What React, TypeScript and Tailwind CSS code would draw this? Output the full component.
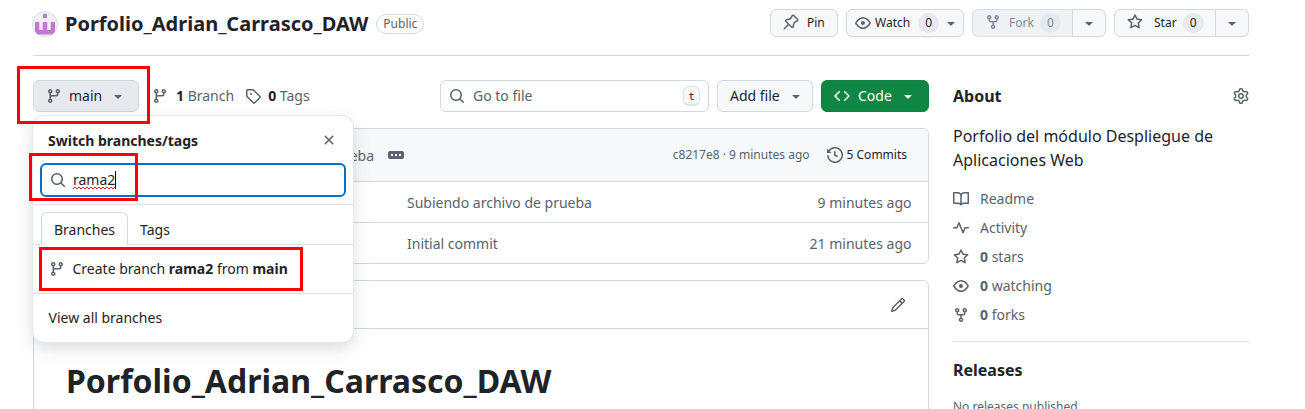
import type { ReactNode } from "react";

const icons = {
  branch:
    "M9.5 3.25a2.25 2.25 0 1 1 3 2.122V6A2.5 2.5 0 0 1 10 8.5H6a1 1 0 0 0-1 1v1.128a2.251 2.251 0 1 1-1.5 0V5.372a2.25 2.25 0 1 1 1.5 0v1.836A2.493 2.493 0 0 1 6 7h4a1 1 0 0 0 1-1v-.628A2.25 2.25 0 0 1 9.5 3.25Zm-6 0a.75.75 0 1 0 1.5 0 .75.75 0 0 0-1.5 0Zm8.25-.75a.75.75 0 1 0 0 1.5.75.75 0 0 0 0-1.5ZM4.25 12a.75.75 0 1 0 0 1.5.75.75 0 0 0 0-1.5Z",
  tag: "M1 7.775V2.75C1 1.784 1.784 1 2.75 1h5.025c.464 0 .91.184 1.238.513l6.25 6.25a1.75 1.75 0 0 1 0 2.474l-5.026 5.026a1.75 1.75 0 0 1-2.474 0l-6.25-6.25A1.752 1.752 0 0 1 1 7.775Zm1.5 0c0 .066.026.13.073.177l6.25 6.25a.25.25 0 0 0 .354 0l5.025-5.025a.25.25 0 0 0 0-.354l-6.25-6.25a.25.25 0 0 0-.177-.073H2.75a.25.25 0 0 0-.25.25ZM6 5a1 1 0 1 1 0 2 1 1 0 0 1 0-2Z",
  star: "M8 .25a.75.75 0 0 1 .673.418l1.882 3.815 4.21.612a.75.75 0 0 1 .416 1.279l-3.046 2.97.719 4.192a.751.751 0 0 1-1.088.791L8 12.347l-3.766 1.98a.75.75 0 0 1-1.088-.79l.72-4.194L.818 6.374a.75.75 0 0 1 .416-1.28l4.21-.611L7.327.668A.75.75 0 0 1 8 .25Zm0 2.445L6.615 5.5a.75.75 0 0 1-.564.41l-3.097.45 2.24 2.184a.75.75 0 0 1 .216.664l-.528 3.084 2.769-1.456a.75.75 0 0 1 .698 0l2.77 1.456-.53-3.084a.75.75 0 0 1 .216-.664l2.24-2.183-3.096-.45a.75.75 0 0 1-.564-.41L8 2.694Z",
  eye: "M8 2c1.981 0 3.671.992 4.933 2.078 1.27 1.091 2.187 2.345 2.637 3.023a1.62 1.62 0 0 1 0 1.798c-.45.678-1.367 1.932-2.637 3.023C11.67 13.008 9.981 14 8 14c-1.981 0-3.671-.992-4.933-2.078C1.797 10.83.88 9.576.43 8.898a1.62 1.62 0 0 1 0-1.798c.45-.677 1.367-1.931 2.637-3.022C4.33 2.992 6.019 2 8 2ZM1.679 7.932a.12.12 0 0 0 0 .136c.411.622 1.241 1.75 2.366 2.717C5.176 11.758 6.527 12.5 8 12.5c1.473 0 2.825-.742 3.955-1.715 1.124-.967 1.954-2.096 2.366-2.717a.12.12 0 0 0 0-.136c-.412-.621-1.242-1.75-2.366-2.717C10.824 4.242 9.473 3.5 8 3.5c-1.473 0-2.825.742-3.955 1.715-1.124.967-1.954 2.096-2.366 2.717ZM8 10a2 2 0 1 1-.001-3.999A2 2 0 0 1 8 10Z",
  fork: "M5 5.372v.878c0 .414.336.75.75.75h4.5a.75.75 0 0 0 .75-.75v-.878a2.25 2.25 0 1 1 1.5 0v.878a2.25 2.25 0 0 1-2.25 2.25h-1.5v2.128a2.251 2.251 0 1 1-1.5 0V8.5h-1.5A2.25 2.25 0 0 1 3.5 6.25v-.878a2.25 2.25 0 1 1 1.5 0ZM5 3.25a.75.75 0 1 0-1.5 0 .75.75 0 0 0 1.5 0Zm6.75.75a.75.75 0 1 0 0-1.5.75.75 0 0 0 0 1.5Zm-3 8.75a.75.75 0 1 0-1.5 0 .75.75 0 0 0 1.5 0Z",
  search:
    "M10.68 11.74a6 6 0 0 1-7.922-8.982 6 6 0 0 1 8.982 7.922l3.04 3.04a.749.749 0 0 1-.326 1.275.749.749 0 0 1-.734-.215ZM11.5 7a4.499 4.499 0 1 0-8.997 0A4.499 4.499 0 0 0 11.5 7Z",
  x: "M3.72 3.72a.75.75 0 0 1 1.06 0L8 6.94l3.22-3.22a.749.749 0 0 1 1.275.326.749.749 0 0 1-.215.734L9.06 8l3.22 3.22a.749.749 0 0 1-.326 1.275.749.749 0 0 1-.734-.215L8 9.06l-3.22 3.22a.751.751 0 0 1-1.042-.018.751.751 0 0 1-.018-1.042L6.94 8 3.72 4.78a.75.75 0 0 1 0-1.06Z",
  caret:
    "m4.427 7.427 3.396 3.396a.25.25 0 0 0 .354 0l3.396-3.396A.25.25 0 0 0 11.396 7H4.604a.25.25 0 0 0-.177.427Z",
  history:
    "m.427 1.927 1.215 1.215a8.002 8.002 0 1 1-1.6 5.685.75.75 0 1 1 1.493-.154 6.5 6.5 0 1 0 1.18-4.458l1.358 1.358A.25.25 0 0 1 3.896 6H.25A.25.25 0 0 1 0 5.75V2.104a.25.25 0 0 1 .427-.177ZM7.75 4a.75.75 0 0 1 .75.75v2.992l2.028.812a.75.75 0 0 1-.557 1.392l-2.5-1A.751.751 0 0 1 7 8.25v-3.5A.75.75 0 0 1 7.75 4Z",
  pencil:
    "M11.013 1.427a1.75 1.75 0 0 1 2.474 0l1.086 1.086a1.75 1.75 0 0 1 0 2.474l-8.61 8.61c-.21.21-.47.364-.756.445l-3.251.93a.75.75 0 0 1-.927-.928l.929-3.25c.081-.286.235-.547.445-.758l8.61-8.61Zm.176 4.823L9.75 4.81l-6.286 6.287a.253.253 0 0 0-.064.108l-.558 1.953 1.953-.558a.253.253 0 0 0 .108-.064Zm1.238-3.763a.25.25 0 0 0-.354 0L10.811 3.75l1.439 1.44 1.263-1.263a.25.25 0 0 0 0-.354Z",
  gear: "M8 0a8.2 8.2 0 0 1 .701.031C9.444.095 9.99.645 10.16 1.29l.288 1.107c.018.066.079.158.212.224.231.114.454.243.668.386.123.082.233.09.299.071l1.103-.303c.644-.176 1.392.021 1.82.63.27.385.506.792.704 1.218.315.675.111 1.422-.364 1.891l-.814.806c-.049.048-.098.147-.088.294.016.257.016.515 0 .772-.01.147.038.246.088.294l.814.806c.475.469.679 1.216.364 1.891a7.977 7.977 0 0 1-.704 1.217c-.428.61-1.176.807-1.82.63l-1.102-.302c-.067-.019-.177-.011-.3.071a5.909 5.909 0 0 1-.668.386c-.133.066-.194.158-.211.224l-.29 1.106c-.168.646-.715 1.196-1.458 1.26a8.006 8.006 0 0 1-1.402 0c-.743-.064-1.289-.614-1.458-1.26l-.289-1.106c-.018-.066-.079-.158-.212-.224a5.738 5.738 0 0 1-.668-.386c-.123-.082-.233-.09-.299-.071l-1.103.303c-.644.176-1.392-.021-1.82-.63a8.12 8.12 0 0 1-.704-1.218c-.315-.675-.111-1.422.363-1.891l.815-.806c.05-.048.098-.147.088-.294a6.214 6.214 0 0 1 0-.772c.01-.147-.038-.246-.088-.294l-.815-.806C.635 6.045.431 5.298.746 4.623a7.92 7.92 0 0 1 .704-1.217c.428-.61 1.176-.807 1.82-.63l1.102.302c.067.019.177.011.3-.071.214-.143.437-.272.668-.386.133-.066.194-.158.211-.224l.29-1.106C6.009.645 6.556.095 7.299.03 7.53.01 7.764 0 8 0Zm-.571 1.525c-.036.003-.108.036-.137.146l-.289 1.105c-.147.561-.549.967-.998 1.189-.173.086-.34.183-.5.29-.417.278-.97.423-1.529.27l-1.103-.303c-.109-.03-.175.016-.195.045-.22.312-.412.644-.573.99-.014.031-.021.11.059.19l.815.806c.411.406.562.957.53 1.456a4.709 4.709 0 0 0 0 .582c.032.499-.119 1.05-.53 1.456l-.815.806c-.081.08-.073.159-.059.19.162.346.353.677.573.989.02.03.085.076.195.046l1.102-.303c.56-.153 1.113-.008 1.53.27.161.107.328.204.501.29.447.222.85.629.997 1.189l.289 1.105c.029.109.101.143.137.146a6.6 6.6 0 0 0 1.142 0c.036-.003.108-.036.137-.146l.289-1.105c.147-.561.549-.967.998-1.189.173-.086.34-.183.5-.29.417-.278.97-.423 1.529-.27l1.103.303c.109.029.175-.016.195-.045.22-.313.411-.644.573-.99.014-.031.021-.11-.059-.19l-.815-.806c-.411-.406-.562-.957-.53-1.456a4.709 4.709 0 0 0 0-.582c-.032-.499.119-1.05.53-1.456l.815-.806c.081-.08.073-.159.059-.19a6.464 6.464 0 0 0-.573-.989c-.02-.03-.085-.076-.195-.046l-1.102.303c-.56.153-1.113.008-1.53-.27a4.44 4.44 0 0 0-.501-.29c-.447-.222-.85-.629-.997-1.189l-.289-1.105c-.029-.11-.101-.143-.137-.146a6.6 6.6 0 0 0-1.142 0ZM11 8a3 3 0 1 1-6 0 3 3 0 0 1 6 0ZM9.5 8a1.5 1.5 0 1 0-3.001.001A1.5 1.5 0 0 0 9.5 8Z",
  book: "M0 1.75A.75.75 0 0 1 .75 1h4.253c1.227 0 2.317.59 3 1.501A3.743 3.743 0 0 1 11.006 1h4.245a.75.75 0 0 1 .75.75v10.5a.75.75 0 0 1-.75.75h-4.507a2.25 2.25 0 0 0-1.591.659l-.622.621a.75.75 0 0 1-1.06 0l-.622-.621A2.25 2.25 0 0 0 5.258 13H.75a.75.75 0 0 1-.75-.75Zm7.251 10.324.004-5.073-.002-2.253A2.25 2.25 0 0 0 5.003 2.5H1.5v9h3.757a3.75 3.75 0 0 1 1.994.574ZM8.755 4.75l-.004 7.322a3.752 3.752 0 0 1 1.992-.572H14.5v-9h-3.495a2.25 2.25 0 0 0-2.25 2.25Z",
  pulse:
    "M6 2c.306 0 .582.187.696.471L10 10.731l1.304-3.26A.751.751 0 0 1 12 7h3.25a.75.75 0 0 1 0 1.5h-2.742l-1.812 4.528a.751.751 0 0 1-1.392 0L6 4.77 4.696 8.03A.75.75 0 0 1 4 8.5H.75a.75.75 0 0 1 0-1.5h2.742l1.812-4.529A.751.751 0 0 1 6 2Z",
  code: "m11.28 3.22 4.25 4.25a.75.75 0 0 1 0 1.06l-4.25 4.25a.749.749 0 0 1-1.275-.326.749.749 0 0 1 .215-.734L13.94 8l-3.72-3.72a.749.749 0 0 1 .326-1.275.749.749 0 0 1 .734.215Zm-6.56 0a.751.751 0 0 1 1.042.018.751.751 0 0 1 .018 1.042L2.06 8l3.72 3.72a.749.749 0 0 1-.326 1.275.749.749 0 0 1-.734-.215L.47 8.53a.75.75 0 0 1 0-1.06Z",
  pin: "m11.294.984 3.722 3.722a1.75 1.75 0 0 1-.504 2.826l-1.327.613a3.089 3.089 0 0 0-1.707 2.084l-.584 2.454c-.317 1.332-1.972 1.8-2.94.832L5.75 11.311 1.78 15.28a.749.749 0 1 1-1.06-1.06l3.969-3.97-2.204-2.204c-.968-.968-.5-2.623.832-2.94l2.454-.584a3.08 3.08 0 0 0 2.084-1.707l.613-1.327a1.75 1.75 0 0 1 2.826-.504ZM6.283 9.723l2.732 2.731a.25.25 0 0 0 .42-.119l.584-2.454a4.586 4.586 0 0 1 2.537-3.098l1.328-.613a.25.25 0 0 0 .072-.404l-3.722-3.722a.25.25 0 0 0-.404.072l-.613 1.328a4.584 4.584 0 0 1-3.098 2.537l-2.454.584a.25.25 0 0 0-.119.42l2.731 2.732Z",
};

type IconName = keyof typeof icons;

function Icon({ name, className = "" }: { name: IconName; className?: string }) {
  return (
    <svg viewBox="0 0 16 16" fill="currentColor" className={`size-4 shrink-0 ${className}`}>
      <path d={icons[name]} />
    </svg>
  );
}

function Counter({ className = "" }: { className?: string }) {
  return (
    <span className={`flex h-5 w-[21px] items-center justify-center rounded-full bg-[#e6eaef] text-xs ${className}`}>
      0
    </span>
  );
}

function Avatar() {
  return (
    <svg viewBox="0 0 26 26" className="-ml-px size-[26px] shrink-0">
      <circle cx="13" cy="13" r="12.5" fill="#f0f0f0" stroke="#dcdfe3" />
      <path
        fill="#c078d0"
        d="M11 3h4v4h-4zM3 11h4.300v8h3.400v-8h4.600v8h3.400v-8H23v9.500L20.500 23.500h-15L3 20.500z"
      />
    </svg>
  );
}

function Header() {
  return (
    <header className="flex h-14 items-start border-b border-[#d1d9e0]">
      <div className="flex h-[48px] items-center">
        <Avatar />
        <h1 className="ml-[7px] text-xl font-bold whitespace-nowrap">Porfolio_Adrian_Carrasco_DAW</h1>
        <span className="ml-2 flex h-5 w-12 items-center justify-center rounded-full border border-[#d1d9e0] text-xs text-[#59636e]">
          Public
        </span>
      </div>
      <div className="mt-[9px] ml-auto flex gap-2 text-xs">
        <button className="flex h-7 w-[68px] items-center rounded-md border border-[#d1d9e0] bg-[#f6f8fa] pl-3">
          <Icon name="pin" className="mr-2 -translate-y-px text-[#59636e]" />
          Pin
        </button>
        <button className="flex h-7 w-[118px] items-center rounded-md border border-[#d1d9e0] bg-[#f6f8fa] pl-2 shadow-[0_1px_0_rgba(31,35,40,0.04)]">
          <Icon name="eye" className="mr-1 text-[#59636e]" />
          Watch
          <Counter className="ml-2" />
          <Icon name="caret" className="ml-1 text-[#59636e]" />
        </button>
        <div className="flex h-7">
          <button className="flex w-[101px] items-center rounded-l-md border border-[#d1d9e0]/70 border-r-[#d1d9e0] bg-[#eff2f5] pl-3 text-[#818b98]">
            <Icon name="fork" className="mr-2 -translate-y-px" />
            Fork
            <Counter className="ml-1.5" />
          </button>
          <button className="flex w-[33px] items-center justify-center rounded-r-md border border-l-0 border-[#d1d9e0] bg-[#f6f8fa] text-[#59636e]">
            <Icon name="caret" />
          </button>
        </div>
        <div className="flex h-7">
          <button className="flex w-[102px] items-center rounded-l-md border border-[#d1d9e0] bg-[#f6f8fa] pl-3">
            <Icon name="star" className="mr-[11px] -translate-y-px text-[#59636e]" />
            Star
            <Counter className="ml-1.5" />
          </button>
          <button className="flex w-[33px] items-center justify-center rounded-r-md border border-l-0 border-[#d1d9e0] bg-[#f6f8fa] text-[#59636e]">
            <Icon name="caret" />
          </button>
        </div>
      </div>
    </header>
  );
}

function BranchMenu() {
  return (
    <div className="absolute top-[35px] -left-px z-10 flex h-[228px] w-[322px] flex-col rounded-xl border border-[#d1d9e0]/60 bg-white shadow-[0_6px_12px_-3px_rgba(37,41,46,0.06),0_6px_18px_0_rgba(37,41,46,0.12)]">
      <div className="flex h-[48px] items-center justify-between pr-4 pl-[15px]">
        <strong className="pt-0.5 font-bold">Switch branches/tags</strong>
        <Icon name="x" className="text-[#59636e]" />
      </div>
      <div className="mx-[7px] -mt-px flex h-[34px] items-center rounded-md border-2 border-[#0070d2] pl-2">
        <Icon name="search" className="mr-[7px] text-[#59636e]" />
        <span className="relative">
          rama2
          <svg viewBox="0 0 42 4" className="absolute bottom-0 left-0 h-1 w-[42px]">
            <path
              d="M0 3l2-2 2 2 2-2 2 2 2-2 2 2 2-2 2 2 2-2 2 2 2-2 2 2 2-2 2 2 2-2 2 2 2-2 2 2 2-2 2 2 2-2"
              fill="none"
              stroke="#f0122d"
            />
          </svg>
        </span>
        <span className="h-[18px] w-px bg-black" />
      </div>
      <div className="mt-[7px] flex h-[41px] items-end border-t border-b border-[#d1d9e0]/70 pl-2">
        <div className="-mb-px flex h-[33px] w-[87px] items-center justify-center rounded-t-md border border-b-0 border-[#d1d9e0] bg-white pt-px">
          Branches
        </div>
        <div className="flex h-8 items-center pt-[3px] pl-3">Tags</div>
      </div>
      <div className="flex h-[49px] items-center border-b border-[#d1d9e0]/70 pl-4">
        <Icon name="branch" className="mr-[7.5px] text-[#59636e]" />
        <span>
          Create branch <strong className="font-bold">rama2</strong> from <strong className="font-bold">main</strong>
        </span>
      </div>
      <div className="flex h-[48px] items-center pl-[15.5px]">View all branches</div>
      <Marker className="top-[37px] -left-[4px] h-[48px] w-[109px]" />
      <Marker className="top-[131px] left-[6px] h-[44px] w-[264px]" />
    </div>
  );
}

function Marker({ className }: { className: string }) {
  return <div className={`pointer-events-none absolute z-20 border-[3px] border-[#f00] ${className}`} />;
}

function Toolbar() {
  return (
    <div className="flex h-8 items-center">
      <div className="relative">
        <button className="flex h-8 w-[106px] items-center rounded-md border border-[#d1d9e0] bg-[#e6eaef] pl-3">
          <Icon name="branch" className="mr-[7px] text-[#59636e]" />
          main
          <Icon name="caret" className="ml-2 text-[#59636e]" />
        </button>
        <BranchMenu />
        <Marker className="-top-[14px] -left-[16px] h-[58px] w-[133px]" />
      </div>
      <Icon name="branch" className="ml-[13px] text-[#59636e]" />
      <span className="ml-2 text-[#59636e]">
        <b className="font-bold text-[#1f2328]">1</b> Branch
      </span>
      <Icon name="tag" className="ml-[11px] text-[#59636e]" />
      <span className="ml-[7px] text-[#59636e]">
        <b className="font-bold text-[#1f2328]">0</b> Tags
      </span>
      <div className="ml-auto flex h-8 w-[269px] items-center rounded-md border border-[#d1d9e0] px-2 text-[#59636e]">
        <Icon name="search" className="mr-2" />
        Go to file
        <kbd className="ml-auto flex h-5 w-[17px] items-center justify-center rounded-md border border-b-2 border-[#d1d9e0]/70 bg-[#f6f8fa] font-[Noto_Sans_Mono,DejaVu_Sans_Mono,monospace] text-[11px] text-[#1f2328]">
          t
        </kbd>
      </div>
      <button className="ml-2 flex h-8 w-24 items-center rounded-md border border-[#d1d9e0] bg-[#f6f8fa] pl-3">
        Add file
        <Icon name="caret" className="mr-2 ml-auto text-[#59636e]" />
      </button>
      <button className="ml-2 flex h-8 w-[108px] items-center rounded-md border border-[#0f8040] bg-[#108643] pl-3 text-white">
        <Icon name="code" className="mr-2" />
        Code
        <Icon name="caret" className="mr-3 ml-auto" />
      </button>
    </div>
  );
}

function FileRow({ message, age }: { message: string; age: string }) {
  return (
    <div className="flex h-[41px] items-center border-t border-[#d1d9e0] pt-0.5 pr-[16.5px] pl-[373px] text-[#59636e]">
      <span>{message}</span>
      <span className="ml-auto">{age}</span>
    </div>
  );
}

function SideRow({ icon, children }: { icon: IconName; children: ReactNode }) {
  return (
    <li className="flex h-[29px] items-center">
      <Icon name={icon} className="mr-[11px]" />
      <span>{children}</span>
    </li>
  );
}

export default function App() {
  return (
    <div className="h-[409px] overflow-hidden bg-white pr-14 pl-[33px] font-['Noto_Sans',sans-serif] text-sm text-[#1f2328]">
      <Header />
      <div className="mt-6 flex gap-6">
        <main className="w-[896px]">
          <Toolbar />
          <section className="mt-4 overflow-hidden rounded-md border border-[#d1d9e0]">
            <div className="flex h-[52px] items-center bg-[#f6f8fa] pr-[21px] pl-[213px] text-xs text-[#59636e]">
              <span className="w-[127px] pt-0.5 text-right text-sm whitespace-nowrap">archivo de prueba</span>
              <span className="ml-[14px] flex h-2 w-4 items-center justify-center gap-0.5 rounded-[2px] bg-[#59636e]">
                <i className="size-0.5 bg-white" />
                <i className="size-0.5 bg-white" />
                <i className="size-0.5 bg-white" />
              </span>
              <span className="ml-auto">c8217e8 · 9 minutes ago</span>
              <Icon name="history" className="mr-1 ml-[17px]" />
              <span className="text-[#1f2328]">5 Commits</span>
            </div>
            <FileRow message="Subiendo archivo de prueba" age="9 minutes ago" />
            <FileRow message="Initial commit" age="21 minutes ago" />
          </section>
          <section className="mt-4 h-[200px] rounded-t-md border border-[#d1d9e0]">
            <div className="flex h-12 items-center justify-end border-b border-[#d1d9e0] pr-[22px] text-[#59636e]">
              <Icon name="pencil" />
            </div>
            <h2 className="mt-[30px] ml-8 text-[32px] leading-[44px] font-bold">Porfolio_Adrian_Carrasco_DAW</h2>
          </section>
        </main>
        <aside className="w-[296px]">
          <div className="flex h-8 items-center justify-between">
            <h2 className="text-base font-bold">About</h2>
            <Icon name="gear" className="text-[#59636e]" />
          </div>
          <p className="mt-3 text-base leading-6">Porfolio del módulo Despliegue de Aplicaciones Web</p>
          <ul className="mt-3 border-b border-[#d1d9e0]/70 pb-3 text-[#59636e]">
            <SideRow icon="book">Readme</SideRow>
            <SideRow icon="pulse">Activity</SideRow>
            <SideRow icon="star">
              <b>0</b> stars
            </SideRow>
            <SideRow icon="eye">
              <b>0</b> watching
            </SideRow>
            <SideRow icon="fork">
              <b>0</b> forks
            </SideRow>
          </ul>
          <h2 className="mt-4 text-base leading-6 font-bold">Releases</h2>
          <p className="mt-4 text-xs leading-[18px] text-[#59636e]">No releases published</p>
        </aside>
      </div>
    </div>
  );
}
